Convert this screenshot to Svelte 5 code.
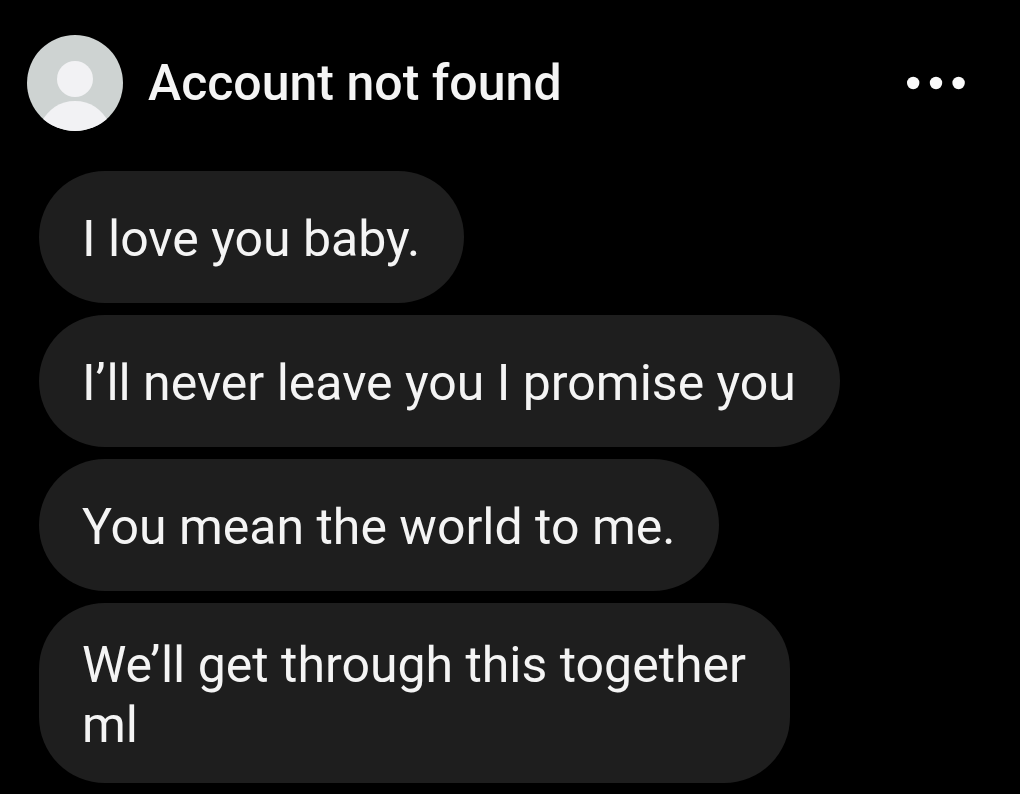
<script>
    const contact = "Account not found";

    const messages = [
        "I love you baby.",
        "I’ll never leave you I promise you",
        "You mean the world to me.",
        "We’ll get through this together\nml",
    ];
</script>

<main>
    <header>
        <svg class="avatar" viewBox="0 0 96 96" aria-hidden="true">
            <clipPath id="avatar-clip">
                <circle cx="48" cy="48" r="48" />
            </clipPath>
            <g clip-path="url(#avatar-clip)">
                <rect width="96" height="96" fill="#ced3d2" />
                <circle cx="48" cy="44" r="18" fill="#f2f2f4" />
                <path d="M14 88C21 74 33 66 48 66s27 8 34 22v8H14z" fill="#f2f2f4" />
            </g>
        </svg>
        <h1>{contact}</h1>
        <button type="button" aria-label="More options">
            <svg viewBox="0 0 60 16" aria-hidden="true">
                <circle cx="7.2" cy="8" r="6.2" />
                <circle cx="30" cy="8" r="6.2" />
                <circle cx="52.6" cy="8" r="6.2" />
            </svg>
        </button>
    </header>

    <ul>
        {#each messages as message}
            <li>{message}</li>
        {/each}
    </ul>
</main>

<style>
    :global(body) {
        margin: 0;
        background: #000;
    }

    main {
        font-family: Roboto, "Liberation Sans", sans-serif;
        font-size: 50px;
        line-height: 60px;
        color: #f4f4f4;
        background: #000;
    }

    header {
        display: flex;
        align-items: center;
        gap: 25px;
        padding: 35px 54px 40px 27px;
    }

    .avatar {
        width: 96px;
        height: 96px;
        flex: none;
    }

    h1 {
        flex: 1;
        margin: 0;
        font-size: 50px;
        font-weight: 500;
    }

    button {
        display: flex;
        padding: 0;
        border: none;
        background: none;
        cursor: pointer;
    }

    button svg {
        width: 60px;
        height: 16px;
        fill: #fafafa;
    }

    ul {
        display: flex;
        flex-direction: column;
        align-items: flex-start;
        gap: 12px;
        margin: 0;
        padding: 0 120px 12px 39px;
        list-style: none;
    }

    li {
        display: grid;
        align-content: center;
        box-sizing: border-box;
        min-height: 132px;
        padding: 32px 44px 28px 43px;
        border-radius: 66px;
        background: #1e1e1e;
        white-space: pre-line;
    }
</style>
